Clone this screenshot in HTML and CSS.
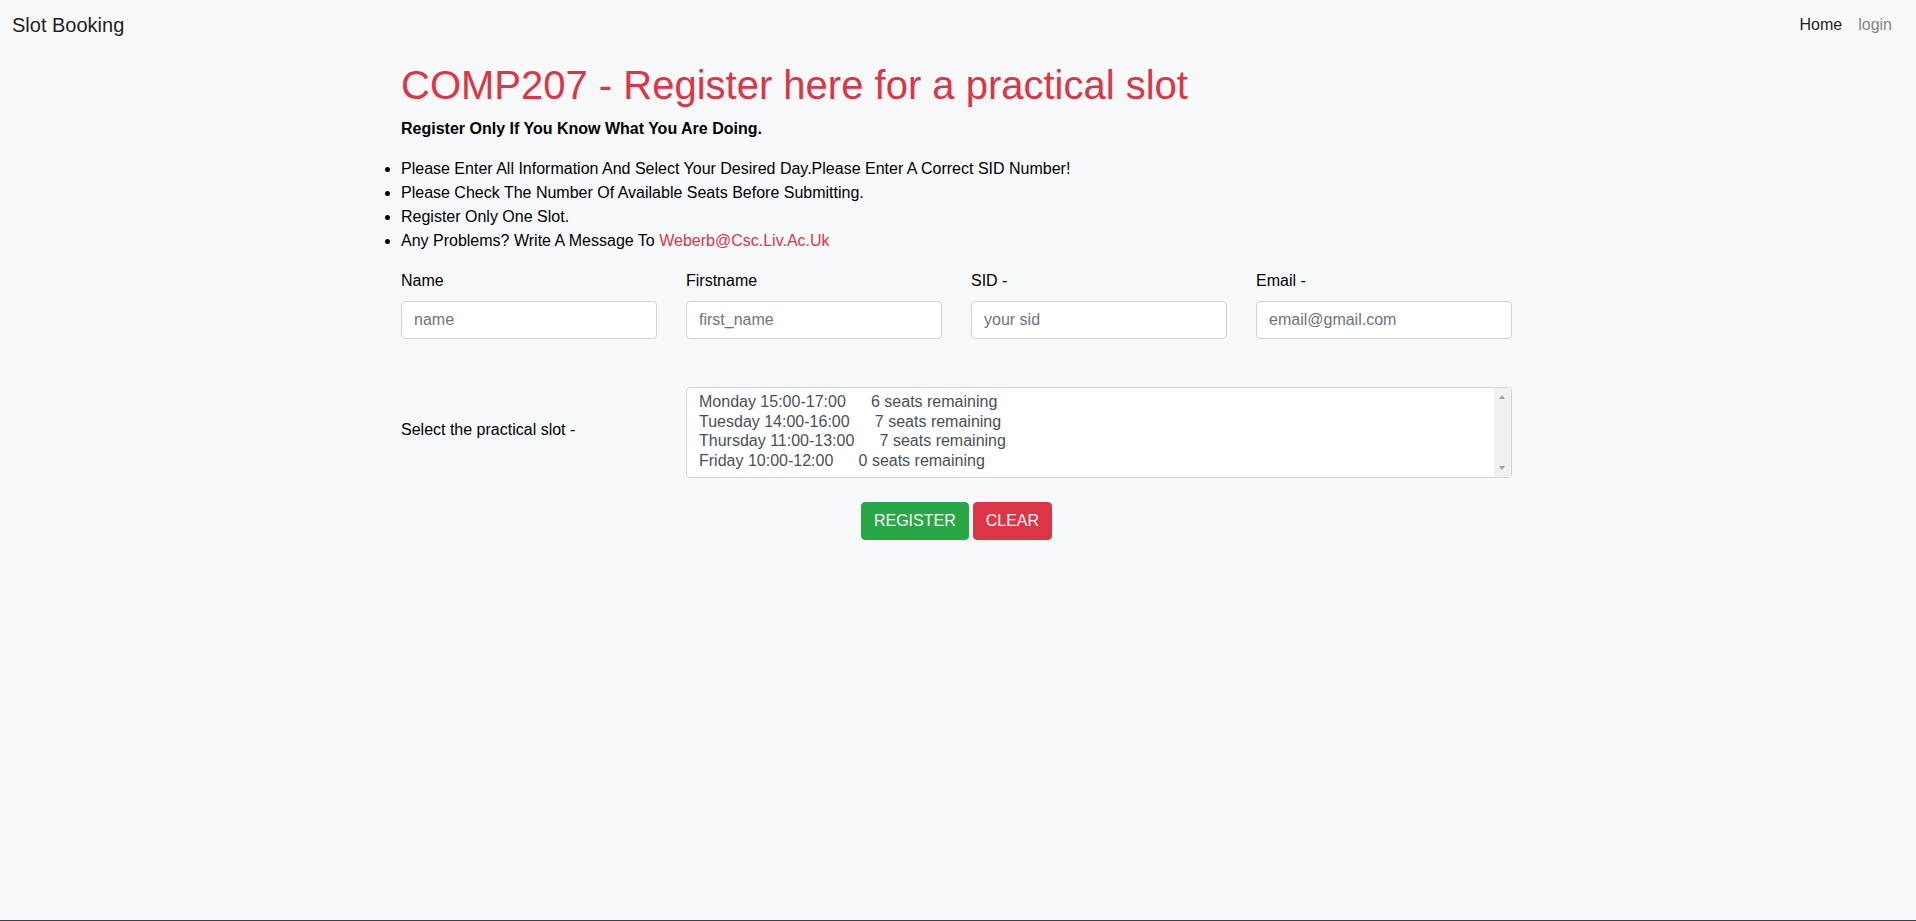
FILE: index.html
```html
<!DOCTYPE html>
<html lang="en">
<head>
<meta charset="utf-8">
<title>Slot Booking</title>
<link rel="stylesheet" href="styles.css">
</head>
<body>
<nav class="navbar">
  <a class="brand" href="#">Slot Booking</a>
  <ul class="nav">
    <li><a class="nav-link active" href="#">Home</a></li>
    <li><a class="nav-link" href="#">login</a></li>
  </ul>
</nav>
<main class="container">
  <h1 class="title">COMP207 - Register here for a practical slot</h1>
  <p class="warning">Register Only If You Know What You Are Doing.</p>
  <ul class="rules">
    <li>Please Enter All Information And Select Your Desired Day.Please Enter A Correct SID Number!</li>
    <li>Please Check The Number Of Available Seats Before Submitting.</li>
    <li>Register Only One Slot.</li>
    <li>Any Problems? Write A Message To <a class="mail" href="#">Weberb@Csc.Liv.Ac.Uk</a></li>
  </ul>
  <form class="form">
    <div class="fields">
      <div class="field">
        <label class="label">Name</label>
        <input class="input" type="text" placeholder="name">
      </div>
      <div class="field">
        <label class="label">Firstname</label>
        <input class="input" type="text" placeholder="first_name">
      </div>
      <div class="field">
        <label class="label">SID -</label>
        <input class="input" type="text" placeholder="your sid">
      </div>
      <div class="field">
        <label class="label">Email -</label>
        <input class="input" type="text" placeholder="email@gmail.com">
      </div>
    </div>
    <div class="slot-row">
      <div class="slot-label">Select the practical slot -</div>
      <div class="listbox" role="listbox">
        <div class="options">
          <div class="option" role="option">Monday 15:00-17:00&nbsp;&nbsp;&nbsp;&nbsp;&nbsp;<span class="seats">6 seats remaining</span></div>
          <div class="option" role="option">Tuesday 14:00-16:00&nbsp;&nbsp;&nbsp;&nbsp;&nbsp;<span class="seats">7 seats remaining</span></div>
          <div class="option" role="option">Thursday 11:00-13:00&nbsp;&nbsp;&nbsp;&nbsp;&nbsp;<span class="seats">7 seats remaining</span></div>
          <div class="option" role="option">Friday 10:00-12:00&nbsp;&nbsp;&nbsp;&nbsp;&nbsp;<span class="seats">0 seats remaining</span></div>
        </div>
        <div class="scrollbar">
          <span class="arrow up"></span>
          <span class="arrow down"></span>
        </div>
      </div>
    </div>
    <div class="actions">
      <button type="button" class="btn btn-green">REGISTER</button>
      <button type="button" class="btn btn-red">CLEAR</button>
    </div>
  </form>
</main>
<footer class="bottom-line"></footer>
</body>
</html>
```

FILE: styles.css
```css
* { box-sizing: border-box; }
html { height: 100%; }
body {
  margin: 0;
  min-height: 100%;
  display: flex;
  flex-direction: column;
  background: #f8f9fa;
  color: #212529;
  font-family: "Liberation Sans", Arial, sans-serif;
  font-size: 16px;
  line-height: 1.5;
}
a { text-decoration: none; }

.navbar {
  display: flex;
  align-items: center;
  justify-content: space-between;
  padding: 5px 16px 5px 12px;
}
.brand {
  font-size: 20px;
  line-height: 30px;
  padding: 5px 0;
  color: rgba(0,0,0,.9);
}
.nav {
  display: flex;
  list-style: none;
  margin: 0;
  padding: 0;
}
.nav-link {
  display: block;
  padding: 8px 8px;
  color: rgba(0,0,0,.5);
}
.nav-link.active { color: rgba(0,0,0,.9); }

.container {
  width: 100%;
  max-width: 1142px;
  margin: 0 auto;
  padding: 11px 17px 0 14px;
}
.title {
  margin: 0 0 8px;
  font-size: 40px;
  font-weight: 500;
  line-height: 1.2;
  color: #dc3545;
}
.warning {
  margin: 0 0 16px;
  font-weight: bold;
  color: #000;
}
.rules {
  margin: 0 0 16px;
  padding: 0;
  color: #000;
}
.mail { color: #dc3545; }

.fields {
  display: grid;
  grid-template-columns: repeat(4, 1fr);
  column-gap: 29px;
  margin-bottom: 48px;
}
.label {
  display: block;
  margin-bottom: 8px;
  color: #000;
}
.input {
  display: block;
  width: 100%;
  height: 38px;
  padding: 6px 12px;
  font: inherit;
  color: #495057;
  background: #fff;
  border: 1px solid #ced4da;
  border-radius: 4px;
}
.input::placeholder { color: #6c757d; }

.slot-row {
  display: grid;
  grid-template-columns: 256px 1fr;
  column-gap: 29px;
  align-items: center;
  margin-bottom: 24px;
}
.slot-label { color: #000; padding-bottom: 6px; }
.listbox {
  display: flex;
  height: 91px;
  background: #fff;
  border: 1px solid #ced4da;
  border-radius: 4px;
  overflow: hidden;
}
.options {
  flex: 1;
  padding: 4px 12px 0;
  color: #495057;
  line-height: 19.6px;
}
.option { white-space: nowrap; }
.seats { margin-left: 3px; }
.scrollbar {
  width: 17px;
  background: #f1f1f1;
  position: relative;
}
.arrow {
  position: absolute;
  left: 5px;
  width: 0;
  height: 0;
  border-left: 3.5px solid transparent;
  border-right: 3.5px solid transparent;
}
.arrow.up { top: 7px; border-bottom: 4px solid #a3a3a3; }
.arrow.down { bottom: 7px; border-top: 4px solid #a3a3a3; }

.actions {
  display: flex;
  justify-content: center;
  gap: 4px;
}
.btn {
  height: 38px;
  padding: 6px 12px;
  font: inherit;
  color: #fff;
  border: 1px solid transparent;
  border-radius: 4px;
}
.btn-green { background: #28a745; border-color: #28a745; }
.btn-red { background: #dc3545; border-color: #dc3545; }

.bottom-line {
  margin-top: auto;
  height: 1px;
  background: #3f3f46;
}
```
